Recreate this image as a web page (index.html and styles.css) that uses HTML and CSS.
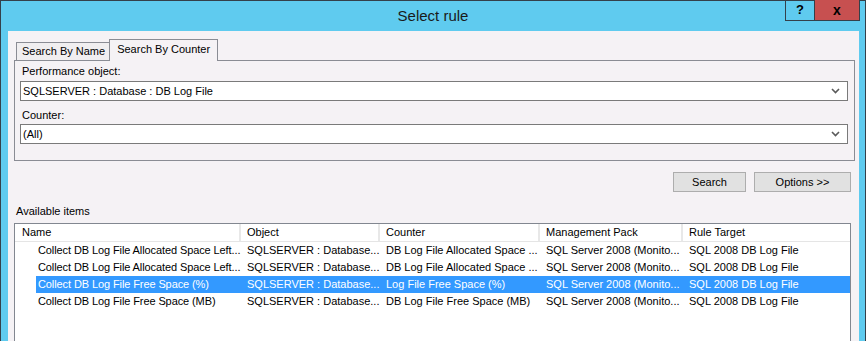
FILE: index.html
```html
<!DOCTYPE html>
<html lang="en">
<head>
    <meta charset="UTF-8">
    <title>Select rule</title>
    <link rel="stylesheet" href="styles.css">
</head>
<body>
    <div class="window">
        <div class="titlebar">
            <div></div>
            <div class="title">Select rule</div>
            <div class="caption-btns">
                <div class="cap-btn help">?</div>
                <div class="cap-btn close">x</div>
            </div>
        </div>
        <div class="frame">
            <div class="content">
                <div class="tabs">
                    <div class="tab">Search By Name</div>
                    <div class="tab active">Search By Counter</div>
                </div>
                <div class="panel">
                    <div class="label first">Performance object:</div>
                    <div class="combo">
                        <span>SQLSERVER : Database : DB Log File</span>
                        <svg width="9" height="6" viewBox="0 0 9 6"><polyline points="1,1 4.5,4.5 8,1" fill="none" stroke="#5a5a5a" stroke-width="1.6"/></svg>
                    </div>
                    <div class="label">Counter:</div>
                    <div class="combo">
                        <span>(All)</span>
                        <svg width="9" height="6" viewBox="0 0 9 6"><polyline points="1,1 4.5,4.5 8,1" fill="none" stroke="#5a5a5a" stroke-width="1.6"/></svg>
                    </div>
                </div>
                <div class="buttons">
                    <div class="btn search">Search</div>
                    <div class="btn options">Options &gt;&gt;</div>
                </div>
                <div class="avail">Available items</div>
                <div class="list">
                    <div class="list-head">
                        <div class="hcell c-name">Name</div>
                        <div class="hcell c-obj">Object</div>
                        <div class="hcell c-cnt">Counter</div>
                        <div class="hcell c-mp">Management Pack</div>
                        <div class="hcell c-tgt">Rule Target</div>
                    </div>
                    <div class="row">
                        <div class="cell n">Collect DB Log File Allocated Space Left...</div>
                        <div class="cell o">SQLSERVER : Database...</div>
                        <div class="cell c">DB Log File Allocated Space ...</div>
                        <div class="cell m">SQL Server 2008 (Monito...</div>
                        <div class="cell t">SQL 2008 DB Log File</div>
                    </div>
                    <div class="row">
                        <div class="cell n">Collect DB Log File Allocated Space Left...</div>
                        <div class="cell o">SQLSERVER : Database...</div>
                        <div class="cell c">DB Log File Allocated Space ...</div>
                        <div class="cell m">SQL Server 2008 (Monito...</div>
                        <div class="cell t">SQL 2008 DB Log File</div>
                    </div>
                    <div class="row selected">
                        <div class="cell n">Collect DB Log File Free Space (%)</div>
                        <div class="cell o">SQLSERVER : Database...</div>
                        <div class="cell c">Log File Free Space (%)</div>
                        <div class="cell m">SQL Server 2008 (Monito...</div>
                        <div class="cell t">SQL 2008 DB Log File</div>
                    </div>
                    <div class="row">
                        <div class="cell n">Collect DB Log File Free Space (MB)</div>
                        <div class="cell o">SQLSERVER : Database...</div>
                        <div class="cell c">DB Log File Free Space (MB)</div>
                        <div class="cell m">SQL Server 2008 (Monito...</div>
                        <div class="cell t">SQL 2008 DB Log File</div>
                    </div>
                </div>
            </div>
        </div>
    </div>
</body>
</html>
```

FILE: styles.css
```css
*{
    margin: 0;
    padding: 0;
    box-sizing: border-box;
}
html, body{
    width: 866px;
    height: 341px;
    overflow: hidden;
}
body{
    font-family: "Liberation Sans", Arial, sans-serif;
    font-size: 11px;
    color: #000;
}
.window{
    width: 866px;
    height: 341px;
    background: #5fcbef;
    border: 1px solid #34404a;
    border-bottom: none;
    display: flex;
    flex-direction: column;
}
.titlebar{
    height: 30px;
    display: grid;
    grid-template-columns: 1fr auto 1fr;
    flex: none;
}
.title{
    font-size: 15px;
    line-height: 30px;
    color: #1a1a1a;
}
.caption-btns{
    display: flex;
    justify-content: flex-end;
    align-items: flex-start;
    padding-right: 5px;
}
.cap-btn{
    height: 21px;
    margin-top: -1px;
    border: 1px solid #34404a;
    border-top: none;
    font-weight: bold;
    font-size: 13px;
    line-height: 20px;
    text-align: center;
}
.help{
    width: 29px;
    border-right: none;
}
.close{
    width: 46px;
    background: #c75050;
    font-size: 14px;
}
.frame{
    flex: 1;
    min-height: 0;
    padding: 0 6px 0 7px;
}
.content{
    height: 100%;
    background: #f5f2f5;
    padding: 8px 4px 0 6px;
    display: flex;
    flex-direction: column;
}
.tabs{
    display: flex;
    align-items: flex-end;
    height: 21px;
    padding-left: 2px;
    flex: none;
}
.tab{
    height: 18px;
    border: 1px solid #8a8c94;
    border-bottom: none;
    background: #f0eef0;
    padding: 0 4px 0 5px;
    line-height: 17px;
    white-space: nowrap;
}
.tab.active{
    height: 22px;
    margin-bottom: -1px;
    margin-left: -1px;
    background: #f5f2f5;
    position: relative;
    z-index: 1;
    padding: 0 7px;
    line-height: 18px;
}
.panel{
    border: 1px solid #8a8c94;
    height: 101px;
    padding: 2px 6px 0 5px;
    flex: none;
}
.label{
    height: 17px;
    line-height: 17px;
    padding-left: 2px;
    margin-top: 6px;
}
.label.first{
    height: 18px;
    margin-top: 0;
}
.combo{
    height: 20px;
    background: #fff;
    border: 1px solid #7a7a7a;
    display: flex;
    align-items: center;
    justify-content: space-between;
    padding: 0 7px 0 2px;
}
.buttons{
    display: flex;
    justify-content: flex-end;
    gap: 8px;
    margin-top: 11px;
    margin-right: 4px;
    flex: none;
}
.btn{
    height: 20px;
    border: 1px solid #adadad;
    background: #e1e1e1;
    text-align: center;
    line-height: 18px;
}
.search{
    width: 73px;
}
.options{
    width: 97px;
}
.avail{
    margin-top: 11px;
    height: 17px;
    line-height: 17px;
    padding-left: 2px;
    margin-bottom: 3px;
    flex: none;
}
.list{
    margin-right: 4px;
    flex: 1;
    min-height: 0;
    overflow: hidden;
    background: #fff;
    border: 1px solid #828790;
    border-bottom: none;
}
.list-head{
    display: grid;
    grid-template-columns: 226px 139px 160px 143px 1fr;
    height: 18px;
    border-bottom: 1px solid #e5e5e5;
}
.hcell{
    line-height: 17px;
    padding-left: 6px;
    border-right: 2px solid #e8e8e8;
}
.hcell.c-name{
    padding-left: 7px;
}
.hcell.c-tgt{
    border-right: none;
}
.row{
    display: grid;
    grid-template-columns: 205px 139px 160px 143px 1fr;
    height: 17px;
    margin-left: 21px;
}
.cell{
    line-height: 17px;
    padding-left: 6px;
    white-space: nowrap;
}
.cell.n{
    padding-left: 2px;
    letter-spacing: -0.1px;
}
.row.selected{
    background: #3399ff;
    color: #fff;
}
```
